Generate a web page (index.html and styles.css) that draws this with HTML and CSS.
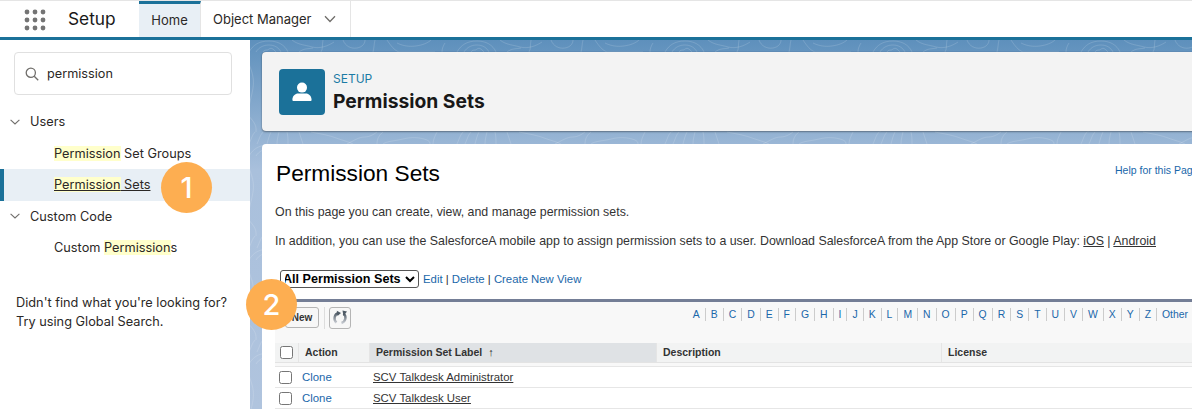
FILE: index.html
```html
<!DOCTYPE html>
<html lang="en">
<head>
<meta charset="utf-8">
<title>Permission Sets</title>
<link rel="stylesheet" href="styles.css">
</head>
<body>
<header class="topbar">
  <div class="launcher">
    <svg width="22" height="22" viewBox="0 0 22 22" fill="#747474"><circle cx="3" cy="3" r="2.4"/><circle cx="11" cy="3" r="2.4"/><circle cx="19" cy="3" r="2.4"/><circle cx="3" cy="11" r="2.4"/><circle cx="11" cy="11" r="2.4"/><circle cx="19" cy="11" r="2.4"/><circle cx="3" cy="19" r="2.4"/><circle cx="11" cy="19" r="2.4"/><circle cx="19" cy="19" r="2.4"/></svg>
  </div>
  <div class="app-name">Setup</div>
  <nav class="tabs">
    <a class="tab tab-active">Home</a>
    <a class="tab tab-object">Object Manager
      <svg class="tab-chevron" width="12" height="8" viewBox="0 0 12 8" fill="none" stroke="#706e6b" stroke-width="1.3"><path d="M1 1.2l5 5.3 5-5.3"/></svg>
    </a>
  </nav>
</header>
<div class="layout">
  <aside class="sidebar">
    <div class="search">
      <svg width="14" height="14" viewBox="0 0 14 14" fill="none" stroke="#706e6b" stroke-width="1.3"><circle cx="5.8" cy="5.8" r="4.6"/><path d="M9.2 9.2l4 4"/></svg>
      <span>permission</span>
    </div>
    <ul class="tree">
      <li class="tree-group"><svg class="tree-chevron" width="10" height="6" viewBox="0 0 10 6" fill="none" stroke="#706e6b" stroke-width="1.1"><path d="M.6.8L5 5 9.4.8"/></svg>Users</li>
      <li class="tree-item"><mark>Permission</mark> Set Groups</li>
      <li class="tree-item tree-selected"><span class="under"><mark>Permission</mark> Sets</span></li>
      <li class="tree-group"><svg class="tree-chevron" width="10" height="6" viewBox="0 0 10 6" fill="none" stroke="#706e6b" stroke-width="1.1"><path d="M.6.8L5 5 9.4.8"/></svg>Custom Code</li>
      <li class="tree-item">Custom <mark>Permission</mark>s</li>
    </ul>
    <p class="hint">Didn't find what you're looking for?<br>Try using Global Search.</p>
  </aside>
  <main class="content">
    <svg class="topo" width="942" height="369" fill="none">
      <defs>
        <pattern id="contours" width="208" height="104" patternUnits="userSpaceOnUse" x="-3" y="0">
          <g stroke="#fff" stroke-opacity=".16" stroke-width=".9" fill="none">
            <path d="M2 12c4-7 10-11 20-11 9 0 16 4 19 11"/>
            <path d="M9 12c3-5 8-7 13-7 6 0 10 3 12 7"/>
            <path d="M16 12c2-3 4-1 6-3 3-2 5 1 7 3"/>
            <path d="M45 0c6 5 14 5 20 7 8 2 16-1 22-5"/>
            <path d="M52 12c5-4 10-3 14-4"/>
            <path d="M76 0c-1 5 0 9-2 12"/>
            <path d="M96 0c2 6 8 9 14 8 6-1 8-5 8-8"/>
            <path d="M128 0c-1 4-1 9-2 12"/>
            <path d="M140 0c4 6 7 10 12 12h36"/>
            <path d="M150 3c8 4 16 4 24 2 4-1 8-3 10-5"/>
            <path d="M198 3c-2 3-3 6-3 9"/>
            <path d="M8 92c-3 3-4 8-6 12M16 92c-3 3-4 8-6 12M24 92c-2 4-3 8-4 12M32 92c-1 4-2 8-2 12M40 92c1 4 1 8 1 12M52 92c1 4 3 8 4 12"/>
            <path d="M64 92c10 2 18 3 28 7 6 2 10 3 14 5"/>
            <path d="M100 104c8-4 12-7 18-7 4 0 8-2 12-5"/>
            <path d="M130 104c0-5 2-9 6-12"/>
            <path d="M136 104c4-3 12-3 20-5 8-2 16-2 24 1 2 1 3 2 3 4"/>
            <path d="M190 92c-2 4-4 8-4 12"/>
            <path d="M0 18c3 10 8 18 6 30-1 8-4 14-4 22M0 74c5 6 10 10 9 18"/>
          </g>
        </pattern>
      </defs>
      <rect width="942" height="369" fill="url(#contours)"/>
    </svg>
    <section class="page-head">
      <div class="head-icon">
        <svg width="20" height="20" viewBox="0 0 20 20" fill="#fff"><circle cx="10" cy="5.6" r="5"/><path d="M0.4 18c0-4 3-6.400 5.600-6.400h8c2.600 0 5.600 2.400 5.600 6.400 0 .8-.6 1-1.400 1H1.800c-.8 0-1.400-.2-1.400-1z"/></svg>
      </div>
      <div class="head-text">
        <div class="head-eyebrow">SETUP</div>
        <h1 class="head-title">Permission Sets</h1>
      </div>
    </section>
    <section class="page-body">
      <div class="title-row">
        <h2 class="body-title">Permission Sets</h2>
        <a class="help">Help for this Page</a>
      </div>
      <p class="para para-first">On this page you can create, view, and manage permission sets.</p>
      <p class="para para-second">In addition, you can use the SalesforceA mobile app to assign permission sets to a user. Download SalesforceA from the App Store or Google Play: <u>iOS</u> | <u>Android</u></p>
      <div class="view-row">
        <select class="view-select"><option>All Permission Sets</option></select>
        <span class="view-links"><a>Edit</a> | <a>Delete</a> | <a>Create New View</a></span>
      </div>
      <div class="list">
        <div class="list-tools">
          <div class="buttons">
            <button class="btn btn-new">New</button>
            <span class="btn-sep"></span>
            <button class="btn btn-refresh" aria-label="Refresh">
              <svg width="16" height="16" viewBox="0 0 16 16" fill="none" stroke-width="2.400">
                <defs>
                  <linearGradient id="fade" x1="0" y1="0" x2="0" y2="1"><stop offset="0" stop-color="#4f5b66"/><stop offset="1" stop-color="#c4c8cf"/></linearGradient>
                </defs>
                <path d="M6.500 3A5.500 5.500 0 0 0 4.500 12.500" stroke="url(#fade)"/>
                <path d="M9.500 13A5.500 5.500 0 0 0 11.500 3.500" stroke="url(#fade)"/>
                <path d="M4.800 .8L9 3 5.500 6z" fill="#4f5b66"/>
                <path d="M10.500 .5L15 1.500 11.500 6z" fill="#4f5b66"/>
              </svg>
            </button>
          </div>
          <div class="alpha">
            <a>A</a><a>B</a><a>C</a><a>D</a><a>E</a><a>F</a><a>G</a><a>H</a><a>I</a><a>J</a><a>K</a><a>L</a><a>M</a><a>N</a><a>O</a><a>P</a><a>Q</a><a>R</a><a>S</a><a>T</a><a>U</a><a>V</a><a>W</a><a>X</a><a>Y</a><a>Z</a><a>Other</a>
          </div>
        </div>
        <div class="grid grid-head">
          <div class="cell cell-check"><span class="check check-head"></span></div>
          <div class="cell th">Action</div>
          <div class="cell th th-sorted">Permission Set Label <span class="sort">↑</span></div>
          <div class="cell th">Description</div>
          <div class="cell th">License</div>
        </div>
        <div class="grid grid-row grid-row-first">
          <div class="cell cell-check-row"><span class="check"></span></div>
          <div class="cell cell-text"><a class="link">Clone</a></div>
          <div class="cell cell-text"><u>SCV Talkdesk Administrator</u></div>
          <div class="cell"></div>
          <div class="cell"></div>
        </div>
        <div class="grid grid-row">
          <div class="cell cell-check-row"><span class="check"></span></div>
          <div class="cell cell-text"><a class="link">Clone</a></div>
          <div class="cell cell-text"><u>SCV Talkdesk User</u></div>
          <div class="cell"></div>
          <div class="cell"></div>
        </div>
      </div>
    </section>
  </main>
</div>
<div class="badge badge-one">1</div>
<div class="badge badge-two">2</div>
</body>
</html>
```
FILE: styles.css
```css
* { box-sizing: border-box; }
html, body { margin: 0; height: 409px; overflow: hidden; }
body { font-family: Inter, "Liberation Sans", sans-serif; color: #2b2826; background: #fff; position: relative; width: 1192px; }
a { text-decoration: none; }
p, h1, h2, ul { margin: 0; padding: 0; }
ul { list-style: none; }

.topbar { height: 40px; display: flex; align-items: stretch; border-top: 1px solid #e5e5e5; border-bottom: 3px solid #1b7199; background: #fff; }
.launcher { width: 68px; padding: 8px 0 0 24px; }
.app-name { width: 71px; font-size: 17.300px; line-height: 36px; color: #181818; }
.tabs { display: flex; }
.tab { display: flex; align-items: center; font-size: 13px; color: #2b2826; height: 36px; border-right: 1px solid #e5e5e5; }
.tab-active { width: 62px; justify-content: center; background: #e8eff5; border-top: 3px solid #1b7199; padding-bottom: 2px; }
.tab-object { width: 150px; padding: 0 0 0 12px; gap: 13px; }

.layout { display: flex; height: 369px; }
.sidebar { width: 250px; flex: none; background: #fff; }
.search { margin: 12px 0 0 14px; width: 218px; height: 43px; border: 1px solid #e0e0e0; border-radius: 4px; display: flex; align-items: center; gap: 8px; padding-left: 10px; font-size: 12.700px; color: #2b2826; }
.tree { margin-top: 11px; font-size: 12.750px; }
.tree-group, .tree-item { height: 31.500px; display: flex; align-items: center; white-space: pre; }
.tree-group { padding-left: 10px; gap: 10px; }
.tree-chevron { flex: none; }
.tree-item { padding-left: 54px; }
.tree-selected { background: #e8eff5; border-left: 4px solid #1b7199; padding-left: 50px; }
.under { text-decoration: underline; }
mark { background: #ffffcb; color: inherit; }
.hint { margin-top: 29px; padding-left: 16px; font-size: 12.750px; line-height: 19px; }

.content { flex: none; width: 942px; position: relative; overflow: hidden; padding: 12px 0 0 12px; background: linear-gradient(180deg, #5e90bc 0, #a9c0dc 130px, #b0c4de 100%); }
.topo { position: absolute; left: 0; top: 0; }
.page-head { position: relative; width: 960px; height: 79px; background: #f3f3f3; border-radius: 4px; box-shadow: 0 0 1px rgba(0,0,0,.35), 0 1px 2px rgba(0,0,0,.35); display: flex; align-items: center; gap: 8px; padding-left: 17px; }
.head-icon { width: 46px; height: 46px; background: #1b7199; border-radius: 4px; display: flex; align-items: center; justify-content: center; }
.head-text { padding-top: 4px; }
.head-eyebrow { font-size: 12px; line-height: 16px; color: #1b7ba5; }
.head-title { font-size: 19.300px; line-height: 29px; font-weight: 700; color: #181818; }

.page-body { position: relative; width: 960px; height: 300px; margin-top: 13px; background: #fff; border-radius: 4px 4px 0 0; padding-left: 13px; font-family: "Liberation Sans", Arial, sans-serif; }
.title-row { display: flex; justify-content: space-between; width: 917px; padding-top: 16px; }
.body-title { font-size: 22.700px; line-height: 27px; font-weight: 400; color: #000; margin-left: 1px; }
.help { font-size: 10.500px; color: #1a67aa; margin-top: 4px; white-space: nowrap; width: 77px; }
.para { font-size: 12.380px; line-height: 14px; color: #333; white-space: nowrap; }
.para-first { margin-top: 18px; }
.para-second { margin-top: 15px; }
.view-row { display: flex; align-items: center; gap: 4px; margin-top: 20px; height: 21px; font-size: 11.350px; padding-left: 5px; }
.view-select { font: 700 12.600px "Liberation Sans", Arial, sans-serif; text-indent: -2px; width: 139px; height: 18px; color: #000; background: #fff; border: 1px solid #555; border-radius: 3px; padding: 0; }
.view-links { color: #333; }
.view-links a, .link { color: #1a67aa; }

.list { margin-top: 10px; width: 920px; border-top: 3px solid #747e96; background: #f8f8f8; }
.list-tools { height: 41px; display: flex; justify-content: space-between; padding-left: 10px; }
.buttons { display: flex; align-items: flex-start; padding-top: 5px; }
.btn { font: 700 10px "Liberation Sans", Arial, sans-serif; color: #333; background: #f7f7f7; border: 1px solid #b5b5b5; border-radius: 3px; padding: 0; }
.btn-new { width: 34px; height: 21px; }
.btn-sep { width: 1px; height: 22px; background: #ddd; margin: 0 4px 0 5px; }
.btn-refresh { width: 22px; height: 22px; display: flex; align-items: center; justify-content: center; }
.alpha { display: flex; align-items: flex-start; padding-top: 6px; font-size: 10.400px; padding-right: 7px; }
.alpha a { color: #1a67aa; line-height: 13px; padding: 0 5px; border-left: 1px solid #ccc; }
.alpha a:first-child { border-left: 0; }
.alpha a:last-child { padding-right: 0; }

.grid { display: grid; grid-template-columns: 23px 71px 287px 285px 1fr; align-items: stretch; font-size: 11.400px; }
.cell { display: flex; align-items: center; padding-left: 6px; color: #333; white-space: pre; }
.cell-check { padding-left: 5px; }
.cell-check-row { display: flex; align-items: center; padding-left: 4px; }
.cell-text { padding-left: 4px; }
.grid-head { height: 20px; background: #f2f3f3; border-bottom: 1px solid #e3e3e3; }
.th { font-size: 10.500px; font-weight: 700; color: #333; border-left: 1px solid #e5e5e5; padding-bottom: 2px; }
.th-sorted { background: #dfe2e5; }
.sort { font-size: 11px; margin-left: 3px; color: #222; }
.grid-row { height: 21px; background: #fff; border-bottom: 1px solid #e6e6e6; }
.grid-row-first { margin-top: 3px; border-top: 1px solid #e6e6e6; height: 22px; }
.check { width: 13px; height: 13px; border: 1px solid #767676; border-radius: 2.500px; background: #fff; display: block; }

.badge { position: absolute; width: 51px; height: 51px; border-radius: 50%; background: #fdae51; color: #fff; font-size: 29px; font-weight: 500; display: flex; align-items: center; justify-content: center; }
.badge-one { left: 161px; top: 162px; }
.badge-two { left: 246px; top: 279px; }
```
